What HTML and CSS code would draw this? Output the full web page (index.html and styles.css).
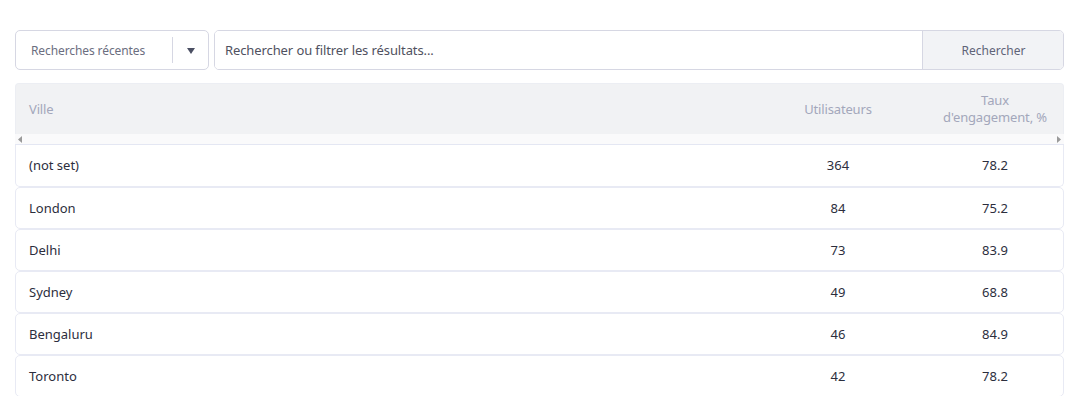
FILE: index.html
```html
<!DOCTYPE html>
<html lang="fr">
<head>
<meta charset="utf-8">
<link rel="stylesheet" href="styles.css">
</head>
<body>
<div class="page">
  <div class="toolbar">
    <div class="recent">
      <span class="recent-label">Recherches récentes</span>
      <span class="recent-sep"></span>
      <span class="recent-arrow"><svg width="8" height="6" viewBox="0 0 8 6"><path d="M0 0H8L4 6Z" fill="#4b4f63"/></svg></span>
    </div>
    <div class="search">
      <input class="search-input" type="text" placeholder="Rechercher ou filtrer les résultats...">
      <button class="search-btn">Rechercher</button>
    </div>
  </div>
  <div class="table">
    <div class="thead">
      <div class="th th-left">Ville</div>
      <div class="th">Utilisateurs</div>
      <div class="th">Taux<br>d'engagement, %</div>
    </div>
    <div class="scroller">
      <svg width="4" height="7" viewBox="0 0 4 7"><path d="M4 0V7L0 3.5Z" fill="#9a9a9a"/></svg>
      <svg width="4" height="7" viewBox="0 0 4 7"><path d="M0 0V7L4 3.5Z" fill="#9a9a9a"/></svg>
    </div>
    <div class="row"><div class="td td-left">(not set)</div><div class="td">364</div><div class="td">78.2</div></div>
    <div class="row"><div class="td td-left">London</div><div class="td">84</div><div class="td">75.2</div></div>
    <div class="row"><div class="td td-left">Delhi</div><div class="td">73</div><div class="td">83.9</div></div>
    <div class="row"><div class="td td-left">Sydney</div><div class="td">49</div><div class="td">68.8</div></div>
    <div class="row"><div class="td td-left">Bengaluru</div><div class="td">46</div><div class="td">84.9</div></div>
    <div class="row"><div class="td td-left">Toronto</div><div class="td">42</div><div class="td">78.2</div></div>
  </div>
</div>
</body>
</html>
```
FILE: styles.css
```css
* { box-sizing: border-box; }
html, body { margin: 0; background: #fff; }
body {
  font-family: "Noto Sans", "Liberation Sans", Arial, sans-serif;
  color: #2e3040;
  font-size: 13px;
}
.page { padding: 30px 14px 0 15px; }
.toolbar { display: flex; gap: 5px; height: 40px; }
.recent {
  width: 194px;
  border: 1px solid #d6d7e3;
  border-radius: 5px;
  display: flex;
  align-items: center;
  padding-left: 15px;
}
.recent-label { font-size: 12px; color: #6b6e80; flex: 1; letter-spacing: -0.1px; }
.recent-sep { width: 1px; height: 26px; background: #d6d7e3; }
.recent-arrow { width: 35px; display: flex; justify-content: center; padding-top: 1px; }
.search {
  flex: 1;
  display: flex;
  border: 1px solid #d6d7e3;
  border-radius: 5px;
  overflow: hidden;
}
.search-input {
  flex: 1;
  border: none;
  outline: none;
  padding: 0 10px;
  font-family: inherit;
  font-size: 13px;
  color: #333;
  letter-spacing: -0.1px;
}
.search-input::placeholder { color: #4f5160; }
.search-btn {
  width: 141px;
  border: none;
  border-left: 1px solid #d6d7e3;
  background: #f2f3f6;
  font-family: inherit;
  font-size: 12px;
  color: #5f6378;
  padding: 0 0 0 1px;
}
.table { margin-top: 13px; }
.thead {
  display: grid;
  grid-template-columns: 1fr 178px 136px;
  height: 51px;
  background: #f1f2f4;
  border-radius: 4px 4px 0 0;
  border: 1px solid #eceef3;
  border-bottom: none;
}
.th {
  display: flex;
  align-items: center;
  justify-content: center;
  text-align: center;
  color: #a3a7bb;
  font-size: 13px;
  line-height: 17px;
  letter-spacing: -0.15px;
}
.th-left { justify-content: flex-start; padding-left: 13px; }
.scroller {
  height: 11px;
  background: #fafafb;
  display: flex;
  justify-content: space-between;
  align-items: center;
  padding: 0 3px 0 3px;
  border-bottom: 1px solid #e4e7f3;
}
.row {
  display: grid;
  grid-template-columns: 1fr 178px 136px;
  height: 42px;
  border: 1px solid #e8eaf4;
  border-top: none;
  border-radius: 0 0 5px 5px;
}
.row + .row { border-top: 1px solid #e8eaf4; border-radius: 5px; }
.td {
  display: flex;
  align-items: center;
  justify-content: center;
  font-size: 13px;
  color: #2c2e3d;
  padding-bottom: 1px;
}
.td-left { justify-content: flex-start; padding-left: 13px; }
```
